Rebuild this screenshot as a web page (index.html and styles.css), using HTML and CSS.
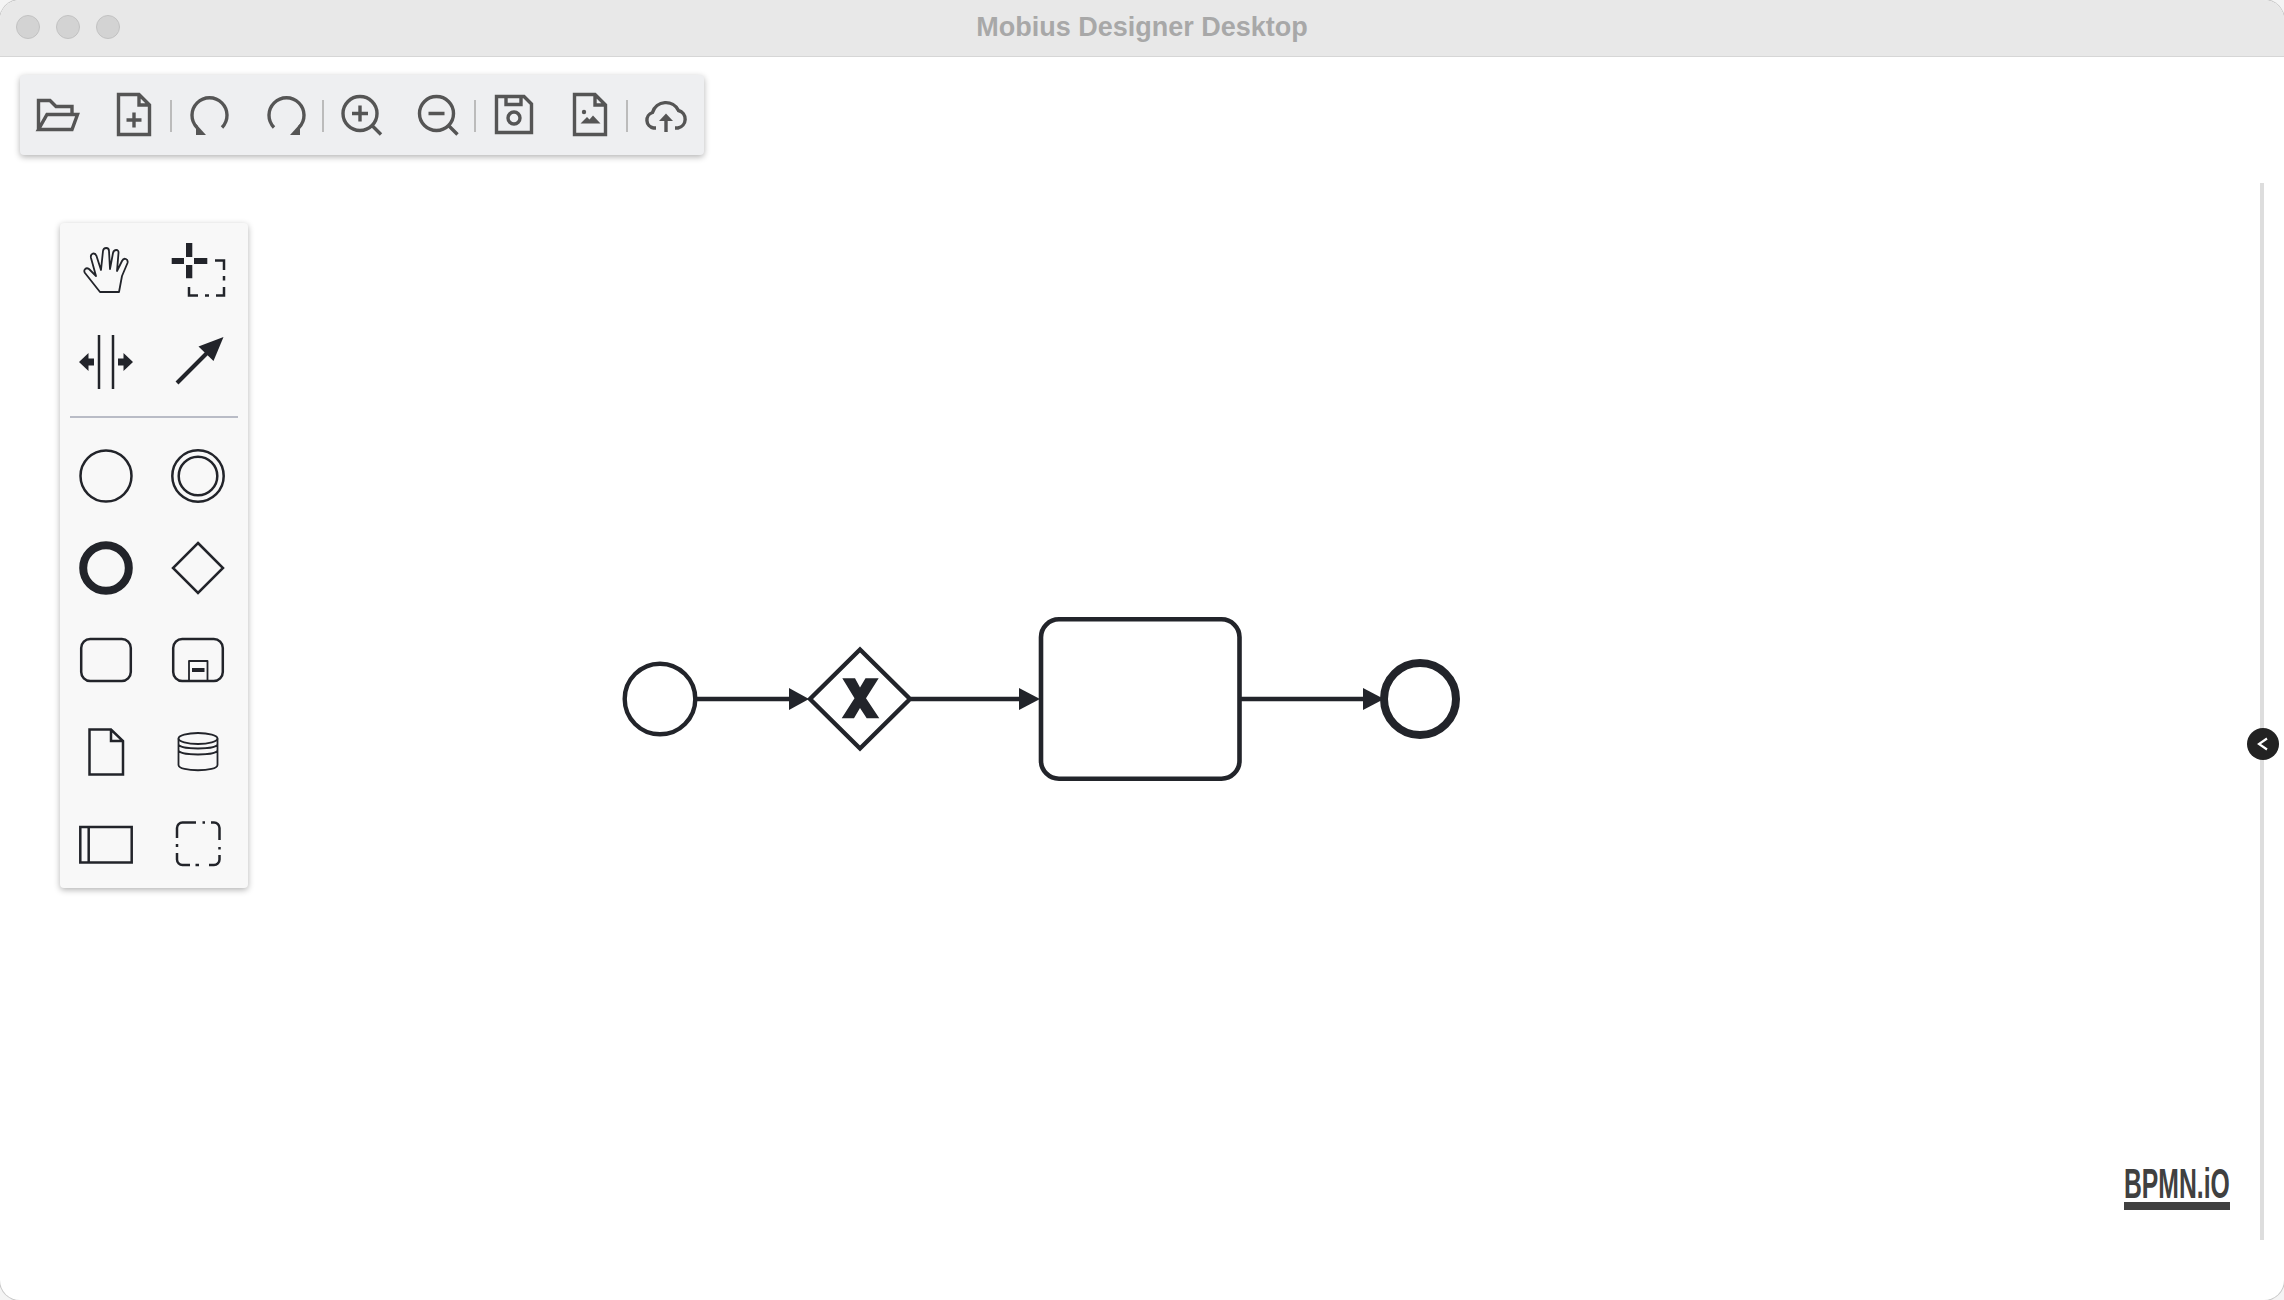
FILE: index.html
```html
<!DOCTYPE html>
<html lang="en">
<head>
  <meta charset="UTF-8">
  <title>Mobius Designer Desktop</title>
  <link rel="stylesheet" href="styles.css">
</head>
<body>
  <div class="window">
    <!-- Title bar -->
    <div class="titlebar">
      <div class="lights">
        <span class="light"></span>
        <span class="light"></span>
        <span class="light"></span>
      </div>
      <div class="title">Mobius Designer Desktop</div>
    </div>

    <div class="workspace">
      <!-- Diagram -->
      <svg class="canvas" viewBox="0 57 2284 1243">
        <g class="shape">
          <circle cx="660" cy="699" r="35.3" stroke-width="4.4"/>
          <polygon points="860,649.5 910,699 860,748.5 810,699" stroke-width="4.4"/>
          <rect x="1041" y="619.3" width="198.5" height="159.4" rx="18" stroke-width="4.6"/>
          <circle cx="1420" cy="699" r="36" stroke-width="8"/>
          <path d="M697 699H790M911 699H1020M1241 699H1364" stroke-width="4.4"/>
        </g>
        <g class="solid">
          <polygon points="789,688 809,699 789,710"/>
          <polygon points="1019,688 1040,699 1019,710"/>
          <polygon points="1363,688 1384,699 1363,710"/>
          <polygon points="842.3,678.3 855,678.3 860,687.5 865.5,678.3 878.7,678.3 866,698.3 879.3,718.3 866.7,718.3 860,708 854,718.3 841.7,718.3 854.5,698.3"/>
        </g>
      </svg>

      <!-- File toolbar -->
      <div class="toolbar">
        <button class="tool"><svg viewBox="0 0 48 48"><path d="M4.5 38.5V9.5H16L22 15.5H38V22M13 23.5H43.5L38 38.5H4.5z"/></svg></button>
        <button class="tool"><svg viewBox="0 0 48 48"><path d="M8.5 3.5H29L39.5 14V43.5H8.5zM29 3.5V14H39.5M24 21.5V36.5M16.5 29H31.5"/></svg></button>
        <span class="tool-sep"></span>
        <button class="tool"><svg viewBox="0 0 48 48"><path d="M11 36.5A17.5 17.5 0 1 1 36 36.5"/><polygon class="fill" points="10,33 20,44 10,44"/></svg></button>
        <button class="tool"><svg viewBox="0 0 48 48"><path d="M37 36.5A17.5 17.5 0 1 0 12 36.5"/><polygon class="fill" points="38,33 28,44 38,44"/></svg></button>
        <span class="tool-sep"></span>
        <button class="tool"><svg viewBox="0 0 48 48"><circle cx="22" cy="22.5" r="17"/><path d="M34.5 35L43 43.5M22 14.5V30.5M14 22.5H30"/></svg></button>
        <button class="tool"><svg viewBox="0 0 48 48"><circle cx="22.5" cy="22.5" r="17"/><path d="M35 35L43.5 43.5M14.5 22.5H30.5"/></svg></button>
        <span class="tool-sep"></span>
        <button class="tool"><svg viewBox="0 0 48 48"><path d="M6.5 5.5H34L41.5 13V41.5H6.5zM16 5.5V13.5H31V5.5"/><circle cx="24" cy="27" r="6"/></svg></button>
        <button class="tool"><svg viewBox="0 0 48 48"><path d="M8.5 3.5H29L39.5 14V43.5H8.5zM29 3.5V14H39.5"/><circle class="fill" cx="18" cy="21" r="2.2"/><polygon class="fill" points="14.5,32.5 21,26 23.5,28.5 27,24.5 34.5,32.5"/></svg></button>
        <span class="tool-sep"></span>
        <button class="tool"><svg viewBox="0 0 48 48"><path d="M14 37H11.5A8 8 0 0 1 10.5 21.5A14 14 0 0 1 36.5 19.5A9 9 0 0 1 36 37H33M24 41V26"/><polygon class="fill" points="24,22.5 31,30 17,30"/></svg></button>
      </div>

      <!-- BPMN palette -->
      <div class="palette">
        <div class="palette-group">
          <div class="entry"><svg viewBox="0 0 48 48"><path class="thin" d="M18 46L3 27C1 24 4 21 7 23L14 30L9 12C8 7 13 6 14.5 10L19 24L21 5C21.5 1 27 1 27 5L28 23L31 7C32 3 37 3 36.5 7L35 25L40 15C42 11 46.5 13 45.5 17L40 30L37 46Z"/></svg></div>
          <div class="entry"><svg viewBox="0 0 48 48"><path class="solid" d="M12 -3H18.3V11H12zM12 19H18.3V32.3H12zM-2.3 12H10V18H-2.3zM20 12H33.3V18H20z"/><path d="M41 14.5H50V24M50 30V34.5M50 41V49.5H42M35 49.5H31M24 49.5H15V41"/></svg></div>
          <div class="entry"><svg viewBox="0 0 48 48"><path d="M17 -3V51M31 -3V51"/><polygon class="solid" points="-3,24 6.5,15 6.5,20.5 12,20.5 12,27.5 6.5,27.5 6.5,33"/><polygon class="solid" points="51,24 41.5,15 41.5,20.5 36,20.5 36,27.5 41.5,27.5 41.5,33"/></svg></div>
          <div class="entry"><svg viewBox="0 0 48 48"><path class="thick" d="M3 45L33 15"/><polygon class="solid" points="49.5,-1 24.5,8.5 39.5,23"/></svg></div>
        </div>
        <div class="palette-sep"></div>
        <div class="palette-group">
          <div class="entry"><svg viewBox="0 0 48 48"><circle cx="24" cy="24" r="25.5"/></svg></div>
          <div class="entry"><svg viewBox="0 0 48 48"><circle cx="24" cy="24" r="25.7"/><circle cx="24" cy="24" r="19.3"/></svg></div>
          <div class="entry"><svg viewBox="0 0 48 48"><circle class="heavy" cx="24" cy="24" r="22.8"/></svg></div>
          <div class="entry"><svg viewBox="0 0 48 48"><polygon points="24,-1 49,24 24,49 -1,24"/></svg></div>
          <div class="entry"><svg viewBox="0 0 48 48"><rect x="-0.8" y="3" width="49.6" height="42" rx="9"/></svg></div>
          <div class="entry"><svg viewBox="0 0 48 48"><rect x="-0.8" y="3" width="49.6" height="42" rx="9"/><path class="thin" d="M15 45V25H33.5V45"/><path class="thick" d="M18 34H30.5"/></svg></div>
          <div class="entry"><svg viewBox="0 0 48 48"><path d="M7.5 1.5H29L41 13V46.5H7.5zM29 1.5V13H41"/></svg></div>
          <div class="entry"><svg viewBox="0 0 48 48"><ellipse class="thin" cx="24" cy="10.5" rx="19.5" ry="5.5"/><path class="thin" d="M4.5 10.5V37C4.5 44 43.5 44 43.5 37V10.5M4.5 16C4.5 22 43.5 22 43.5 16M4.5 22C4.5 28 43.5 28 43.5 22"/></svg></div>
          <div class="entry"><svg viewBox="0 0 48 48"><rect x="-1.7" y="7" width="51.4" height="35.5"/><path d="M6.7 7V42.5"/></svg></div>
          <div class="entry"><svg viewBox="0 0 48 48"><path d="M3 18V8A5.5 5.5 0 0 1 8.5 2.5H22M28.5 2.5H31M37 2.5H40A5.5 5.5 0 0 1 45.5 8V20M45.5 27V29.5M45.5 35V39.5A5.5 5.5 0 0 1 40 45H35M25 45H21.5M16 45H8.5A5.5 5.5 0 0 1 3 39.5V33M3 24V27"/></svg></div>
        </div>
      </div>

      <!-- Properties panel handle -->
      <div class="panel-line"></div>
      <div class="panel-toggle"><svg viewBox="0 0 32 32"><path d="M20 10.5L12 16L20 21.5"/></svg></div>

      <!-- Watermark -->
      <div class="powered"><svg viewBox="0 0 180 47" preserveAspectRatio="none"><text x="0" y="38">BPMN.iO</text></svg></div>
    </div>
  </div>
</body>
</html>
```

FILE: styles.css
```css
/* General */
html, body {
  height: 100%;
}
body {
  margin: 0;
  background-color: #f4f4f4;
  font-family: "Liberation Sans", Arial, sans-serif;
  overflow: hidden;
}
.window {
  display: flex;
  flex-direction: column;
  height: 1300px;
  background-color: #fff;
  border-radius: 20px;
  box-shadow: 0 0 0 1px #c8c8c8;
  overflow: hidden;
}

/* Title bar */
.titlebar {
  display: flex;
  position: relative;
  align-items: center;
  justify-content: center;
  flex: 0 0 56px;
  background-color: #e8e8e8;
  border-bottom: 1px solid #d6d6d6;
}
.lights {
  display: flex;
  position: absolute;
  left: 16px;
  top: 15px;
  gap: 16px;
}
.light {
  box-sizing: border-box;
  width: 24px;
  height: 24px;
  background-color: #d3d3d3;
  border: 1px solid #c2c2c2;
  border-radius: 50%;
}
.title {
  margin-bottom: 1px;
  color: #a8a8a8;
  font-size: 27px;
  font-weight: bold;
}

/* Workspace */
.workspace {
  position: relative;
  flex: 1;
}
.canvas {
  display: block;
  width: 100%;
  height: 100%;
}
.shape {
  fill: #fff;
  stroke: #22242a;
}
.solid {
  fill: #22242a;
  stroke: none;
}

/* Toolbar */
.toolbar {
  display: flex;
  position: absolute;
  left: 20px;
  top: 18px;
  align-items: center;
  width: 684px;
  height: 80px;
  background-color: #eeeff1;
  border-radius: 4px;
  box-shadow: 0 2px 6px rgba(0, 0, 0, 0.3);
}
.tool {
  display: flex;
  align-items: center;
  justify-content: center;
  width: 76px;
  height: 80px;
  padding: 0;
  background: none;
  border: none;
}
.tool svg {
  width: 48px;
  height: 48px;
  fill: none;
  stroke: #555;
  stroke-width: 3.4;
}
.tool .fill {
  fill: #555;
  stroke: none;
}
.tool-sep {
  flex: none;
  width: 2px;
  height: 32px;
  margin: 2px 0 0 -2px;
  background-color: #bbb;
}

/* Palette */
.palette {
  box-sizing: border-box;
  position: absolute;
  left: 60px;
  top: 166px;
  width: 188px;
  height: 665px;
  padding-top: 1px;
  background-color: #f8f8f8;
  border-radius: 4px;
  box-shadow: 0 2px 6px rgba(0, 0, 0, 0.3);
}
.palette-group {
  display: grid;
  grid-template-columns: 92px 92px;
  grid-auto-rows: 92px;
}
.palette-sep {
  height: 2px;
  margin: 8px 10px 12px 10px;
  background-color: #b9bcc6;
}
.entry {
  display: flex;
  align-items: center;
  justify-content: center;
}
.entry svg {
  width: 48px;
  height: 48px;
  overflow: visible;
  fill: none;
  stroke: #22242a;
  stroke-width: 2.5;
}
.entry .solid {
  fill: #22242a;
  stroke: none;
}
.entry .thin {
  stroke-width: 1.8;
  stroke-linejoin: round;
}
.entry .thick {
  stroke-width: 4;
}
.entry .heavy {
  stroke-width: 8;
}

/* Properties panel handle */
.panel-line {
  position: absolute;
  left: 2260px;
  top: 126px;
  width: 4px;
  height: 1057px;
  background-color: #ddd;
}
.panel-toggle {
  position: absolute;
  left: 2247px;
  top: 671px;
  width: 32px;
  height: 32px;
  background-color: #222;
  border-radius: 50%;
}
.panel-toggle svg {
  display: block;
  fill: none;
  stroke: #fff;
  stroke-width: 2.2;
}

/* Watermark */
.powered {
  position: absolute;
  left: 2124px;
  top: 1103px;
  width: 106px;
  border-bottom: 8px solid #404040;
}
.powered svg {
  display: block;
  width: 106px;
  height: 47px;
  margin-bottom: -5px;
  fill: #404040;
  font-family: "Liberation Sans", sans-serif;
  font-size: 42px;
  font-weight: bold;
}
```
